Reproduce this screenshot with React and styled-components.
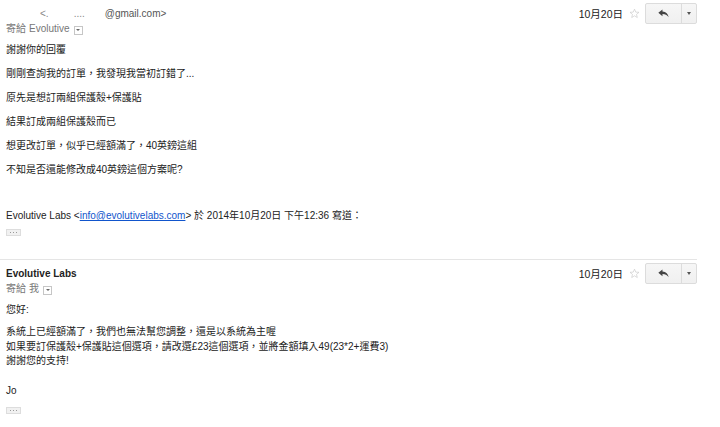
import React from 'react';
import styled, { createGlobalStyle } from 'styled-components';

const Global = createGlobalStyle`
  html, body { margin: 0; padding: 0; background: #fff; }
  body {
    font-family: "Liberation Sans", Arial, "Noto Sans CJK TC", sans-serif;
    font-size: 10px;
    color: #222;
  }
`;

function ReplyIcon() {
  return (
    <svg width="11" height="9" viewBox="0 0 16 13">
      <path d="M6.5 0.5 L0.5 5.5 L6.5 10.5 V7.3 C10.5 7.3 13.2 8.6 15.5 12 C14.7 7.3 11.8 4.2 6.5 3.7 Z" fill="#444" />
    </svg>
  );
}

function StarIcon() {
  return (
    <svg width="11" height="11" viewBox="0 0 24 24">
      <path d="M12 2.5 L14.8 9 L21.8 9.4 L16.4 13.9 L18.1 20.8 L12 17 L5.9 20.8 L7.6 13.9 L2.2 9.4 L9.2 9 Z"
        fill="none" stroke="#c8c8c8" strokeWidth="1.4" strokeLinejoin="round" />
    </svg>
  );
}

function Dots() {
  return (
    <svg width="9" height="3" viewBox="0 0 9 3">
      <rect x="1" y="1" width="1" height="1" fill="#999" />
      <rect x="4" y="1" width="1" height="1" fill="#999" />
      <rect x="7" y="1" width="1" height="1" fill="#999" />
    </svg>
  );
}

function Controls() {
  return (
    <Right>
      <DateText>10月20日</DateText>
      <StarIcon />
      <ButtonGroup>
        <ReplyButton><ReplyIcon /></ReplyButton>
        <MoreButton><Caret /></MoreButton>
      </ButtonGroup>
    </Right>
  );
}

function Recipient({ to }) {
  return (
    <ToLine>
      寄給 <ToName>{to}</ToName>
      <DropBox><SmallCaret /></DropBox>
    </ToLine>
  );
}

export default function App() {
  return (
    <>
      <Global />
      <Page>
        <Message>
          <HeaderRow>
            <Sender>
              <Faded style={{ marginLeft: 34 }}>&lt;.</Faded>
              <Faded style={{ marginLeft: 25 }}>....</Faded>
              <Address>@gmail.com&gt;</Address>
            </Sender>
            <Controls />
          </HeaderRow>
          <Recipient to="Evolutive" />
          <Body>
            <Para>謝謝你的回覆</Para>
            <Para>剛剛查詢我的訂單，我發現我當初訂錯了...</Para>
            <Para>原先是想訂兩組保護殼+保護貼</Para>
            <Para>結果訂成兩組保護殼而已</Para>
            <Para>想更改訂單，似乎已經額滿了，40英鎊這組</Para>
            <Para>不知是否還能修改成40英鎊這個方案呢?</Para>
          </Body>
          <Attribution>
            Evolutive Labs &lt;<Link>info@evolutivelabs.com</Link>&gt; 於 2014年10月20日 下午12:36 寫道：
          </Attribution>
          <Ellipsis><Dots /></Ellipsis>
        </Message>

        <Message $divider>
          <HeaderRow>
            <Name>Evolutive Labs</Name>
            <Controls />
          </HeaderRow>
          <Recipient to="我" />
          <Body>
            <Para>您好:</Para>
            <Lines>
              系統上已經額滿了，我們也無法幫您調整，還是以系統為主喔<br />
              如果要訂保護殼+保護貼這個選項，請改選£23這個選項，並將金額填入49(23*2+運費3)<br />
              謝謝您的支持!
            </Lines>
            <Signature>Jo</Signature>
          </Body>
          <Ellipsis $gap={9}><Dots /></Ellipsis>
        </Message>
      </Page>
    </>
  );
}

const Page = styled.div`
  width: 697px;
  height: 427px;
  overflow: hidden;
`;

const Message = styled.div`
  padding: 3px 0 0 6px;
  border-top: ${p => (p.$divider ? '1px solid #e5e5e5' : 'none')};
  margin-top: ${p => (p.$divider ? '23px' : '0')};
`;

const HeaderRow = styled.div`
  display: flex;
  align-items: center;
  justify-content: space-between;
  height: 21px;
`;

const Sender = styled.div`
  display: flex;
  align-items: center;
  line-height: 14px;
`;

const Faded = styled.span`
  color: #888;
`;

const Address = styled.span`
  color: #555;
  margin-left: 20px;
`;

const Name = styled.div`
  font-weight: bold;
  color: #222;
  line-height: 14px;
`;

const Right = styled.div`
  display: flex;
  align-items: center;
  gap: 5px;
`;

const DateText = styled.span`
  color: #222;
  font-size: 10.5px;
  margin-right: 1px;
`;

const ButtonGroup = styled.div`
  display: flex;
  height: 21px;
  border: 1px solid #dcdcdc;
  border-radius: 2px;
  background: linear-gradient(#f6f6f6, #f0f0f0);
  box-sizing: border-box;
`;

const ReplyButton = styled.div`
  width: 35px;
  display: flex;
  align-items: center;
  justify-content: center;
  border-right: 1px solid #dcdcdc;
`;

const MoreButton = styled.div`
  width: 14px;
  display: flex;
  align-items: center;
  justify-content: center;
`;

const Caret = styled.span`
  width: 0;
  height: 0;
  border-left: 2.5px solid transparent;
  border-right: 2.5px solid transparent;
  border-top: 3px solid #555;
`;

const ToLine = styled.div`
  display: flex;
  align-items: center;
  color: #777;
  line-height: 14px;
  margin-top: -2px;
`;

const ToName = styled.span`
  margin-left: 3px;
`;

const DropBox = styled.span`
  display: inline-flex;
  align-items: center;
  justify-content: center;
  width: 7px;
  height: 7px;
  border: 1px solid #c6c6c6;
  margin-left: 4px;
  margin-top: 2px;
`;

const SmallCaret = styled.span`
  width: 0;
  height: 0;
  border-left: 2px solid transparent;
  border-right: 2px solid transparent;
  border-top: 2.5px solid #666;
`;

const Body = styled.div`
  margin-top: 7px;
  line-height: 14px;
`;

const Para = styled.div`
  margin-bottom: 10px;
`;

const Lines = styled.div`
  line-height: 14.5px;
  margin-top: -2px;
`;

const Signature = styled.div`
  margin-top: 15px;
`;

const Attribution = styled.div`
  line-height: 14px;
  padding-top: 22px;
`;

const Link = styled.span`
  color: #15c;
  text-decoration: underline;
`;

const Ellipsis = styled.div`
  display: flex;
  align-items: center;
  justify-content: center;
  width: 13px;
  height: 5px;
  margin-top: ${p => (p.$gap ?? 6)}px;
  border: 1px solid #ddd;
  background: #f1f1f1;
`;
